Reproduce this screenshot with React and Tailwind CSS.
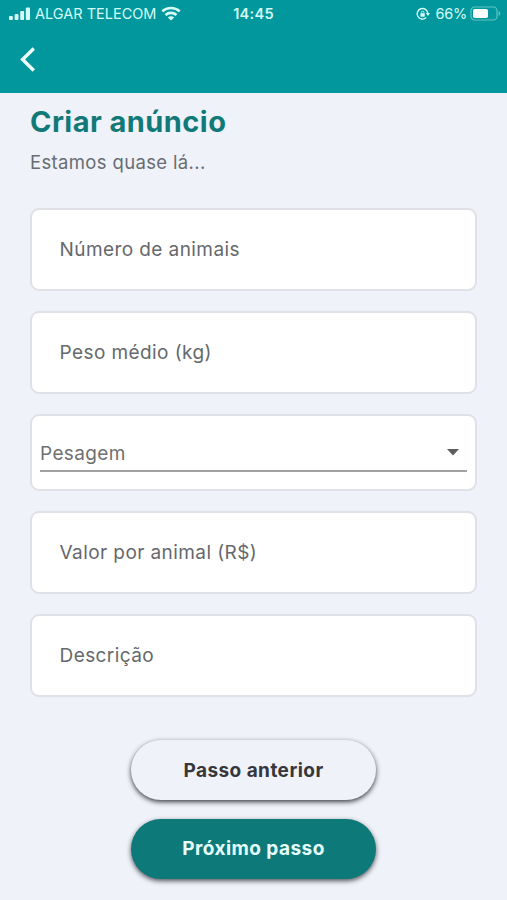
import React from "react";

const StatusBar = () => {
    return (
        <div className="grid grid-cols-[1fr_auto_1fr] items-center h-[27px] pl-[9px] pr-[6px] text-[#d5fbf8] font-['Inter','Liberation_Sans',sans-serif] text-[14.5px]">
            <div className="flex items-center">
                <svg width="22" height="14" viewBox="0 0 22 14" fill="currentColor">
                    <rect x="0" y="9" width="3.9" height="4" rx="1" />
                    <rect x="5.6" y="7" width="3.9" height="6" rx="1" />
                    <rect x="11.2" y="4" width="3.9" height="9" rx="1" />
                    <rect x="16.8" y="0.5" width="4.2" height="12.5" rx="1" />
                </svg>
                <span className="ml-[4px] whitespace-nowrap">ALGAR TELECOM</span>
                <svg className="ml-[5px]" width="20" height="15" viewBox="0 0 20 15" fill="none" stroke="currentColor" strokeWidth="2.6">
                    <path d="M1.3 5.4C6.2 0.9 13.8 0.9 18.7 5.4" />
                    <path d="M4.5 9C7.6 6.2 12.4 6.2 15.5 9" />
                    <path d="M10 14.4L6.8 11.4C8.6 9.9 11.4 9.9 13.2 11.4Z" fill="currentColor" stroke="none" />
                </svg>
            </div>
            <span className="mr-[3px] font-semibold tracking-[0.3px]">14:45</span>
            <div className="flex items-center justify-end">
                <svg width="14" height="14" viewBox="0 0 14 14" fill="none" stroke="currentColor" strokeWidth="1.4">
                    <path d="M11.8 6.4A5.3 5.3 0 1 0 10.2 10.6" />
                    <path d="M9.8 6H14L11.9 9Z" fill="currentColor" stroke="none" />
                    <rect x="4.4" y="6.3" width="4.4" height="3.4" rx="0.6" fill="currentColor" stroke="none" />
                    <path d="M5.3 6.5V5.5A1.3 1.3 0 0 1 7.9 5.5V6.5" strokeWidth="0.9" />
                </svg>
                <span className="ml-[5px] tracking-[-0.2px]">66%</span>
                <svg className="ml-[3px]" width="31" height="15" viewBox="0 0 31 15" fill="none">
                    <rect x="1" y="1" width="26" height="13" rx="3.6" stroke="#62c3c2" strokeWidth="1.2" />
                    <rect x="3" y="3" width="15" height="9" rx="1.8" fill="#fff" />
                    <path d="M28.6 5V10C30.8 9 30.8 6 28.6 5Z" fill="#62c3c2" />
                </svg>
            </div>
        </div>
    );
};

const Field = ({ label }) => {
    return (
        <div className="h-[83px] pl-[27.5px] pt-[2px] flex items-center rounded-[9px] border-2 border-[#dfe1e7] bg-white text-[#65686c] tracking-[0.42px]">
            {label}
        </div>
    );
};

const SelectField = ({ label }) => {
    return (
        <div className="h-[77px] px-[8px] pt-[18px] rounded-[9px] border-2 border-[#dfe1e7] bg-white">
            <div className="flex items-center justify-between h-[38px] pr-[8px] border-b-2 border-[#a3a1a1] text-[#707070]">
                <span className="pt-[4px]">{label}</span>
                <svg className="mt-px" width="12" height="7" viewBox="0 0 12 7" fill="#5d5d5d">
                    <path d="M0 0H12L6 6.5Z" />
                </svg>
            </div>
        </div>
    );
};

export default function App() {
    return (
        <div className="h-[900px] w-full overflow-hidden bg-[#eff2f8] font-['Inter','Open_Sans',sans-serif]">
            <header className="h-[93px] bg-[#01979c]">
                <StatusBar />
                <svg className="ml-[20px] mt-[20px]" width="16" height="25" viewBox="0 0 16 25" fill="none" stroke="#f0ffff" strokeWidth="3.4">
                    <path d="M13.8 1.5L2.6 12.5L13.8 23.5" />
                </svg>
            </header>

            <main className="px-[30px] pt-[11px]">
                <h1 className="h-[36px] leading-[36px] text-[29px] font-bold tracking-[0.45px] text-[#117a79]">Criar anúncio</h1>
                <p className="h-[24px] mt-[10px] leading-[24px] text-[18.5px] tracking-[0.35px] text-[#686d73]">Estamos quase lá...</p>

                {/* form fields */}
                <div className="mt-[34px] flex flex-col gap-[20px] text-[19px] tracking-[0.35px]">
                    <Field label="Número de animais" />
                    <Field label="Peso médio (kg)" />
                    <SelectField label="Pesagem" />
                    <Field label="Valor por animal (R$)" />
                    <Field label="Descrição" />
                </div>

                <div className="mt-[43px] flex flex-col items-center gap-[19px] text-[19px] font-bold tracking-[0.45px]">
                    <button className="w-[245px] h-[60px] pt-[2px] rounded-full bg-[#eff2f8] text-[#36363b] shadow-[0_2px_5px_rgba(30,30,40,0.85)]">
                        Passo anterior
                    </button>
                    <button className="w-[245px] h-[60px] rounded-full bg-[#0e7979] text-[#e6ffff] shadow-[0_2px_5px_rgba(30,30,40,0.75)]">
                        Próximo passo
                    </button>
                </div>
            </main>
        </div>
    );
}
